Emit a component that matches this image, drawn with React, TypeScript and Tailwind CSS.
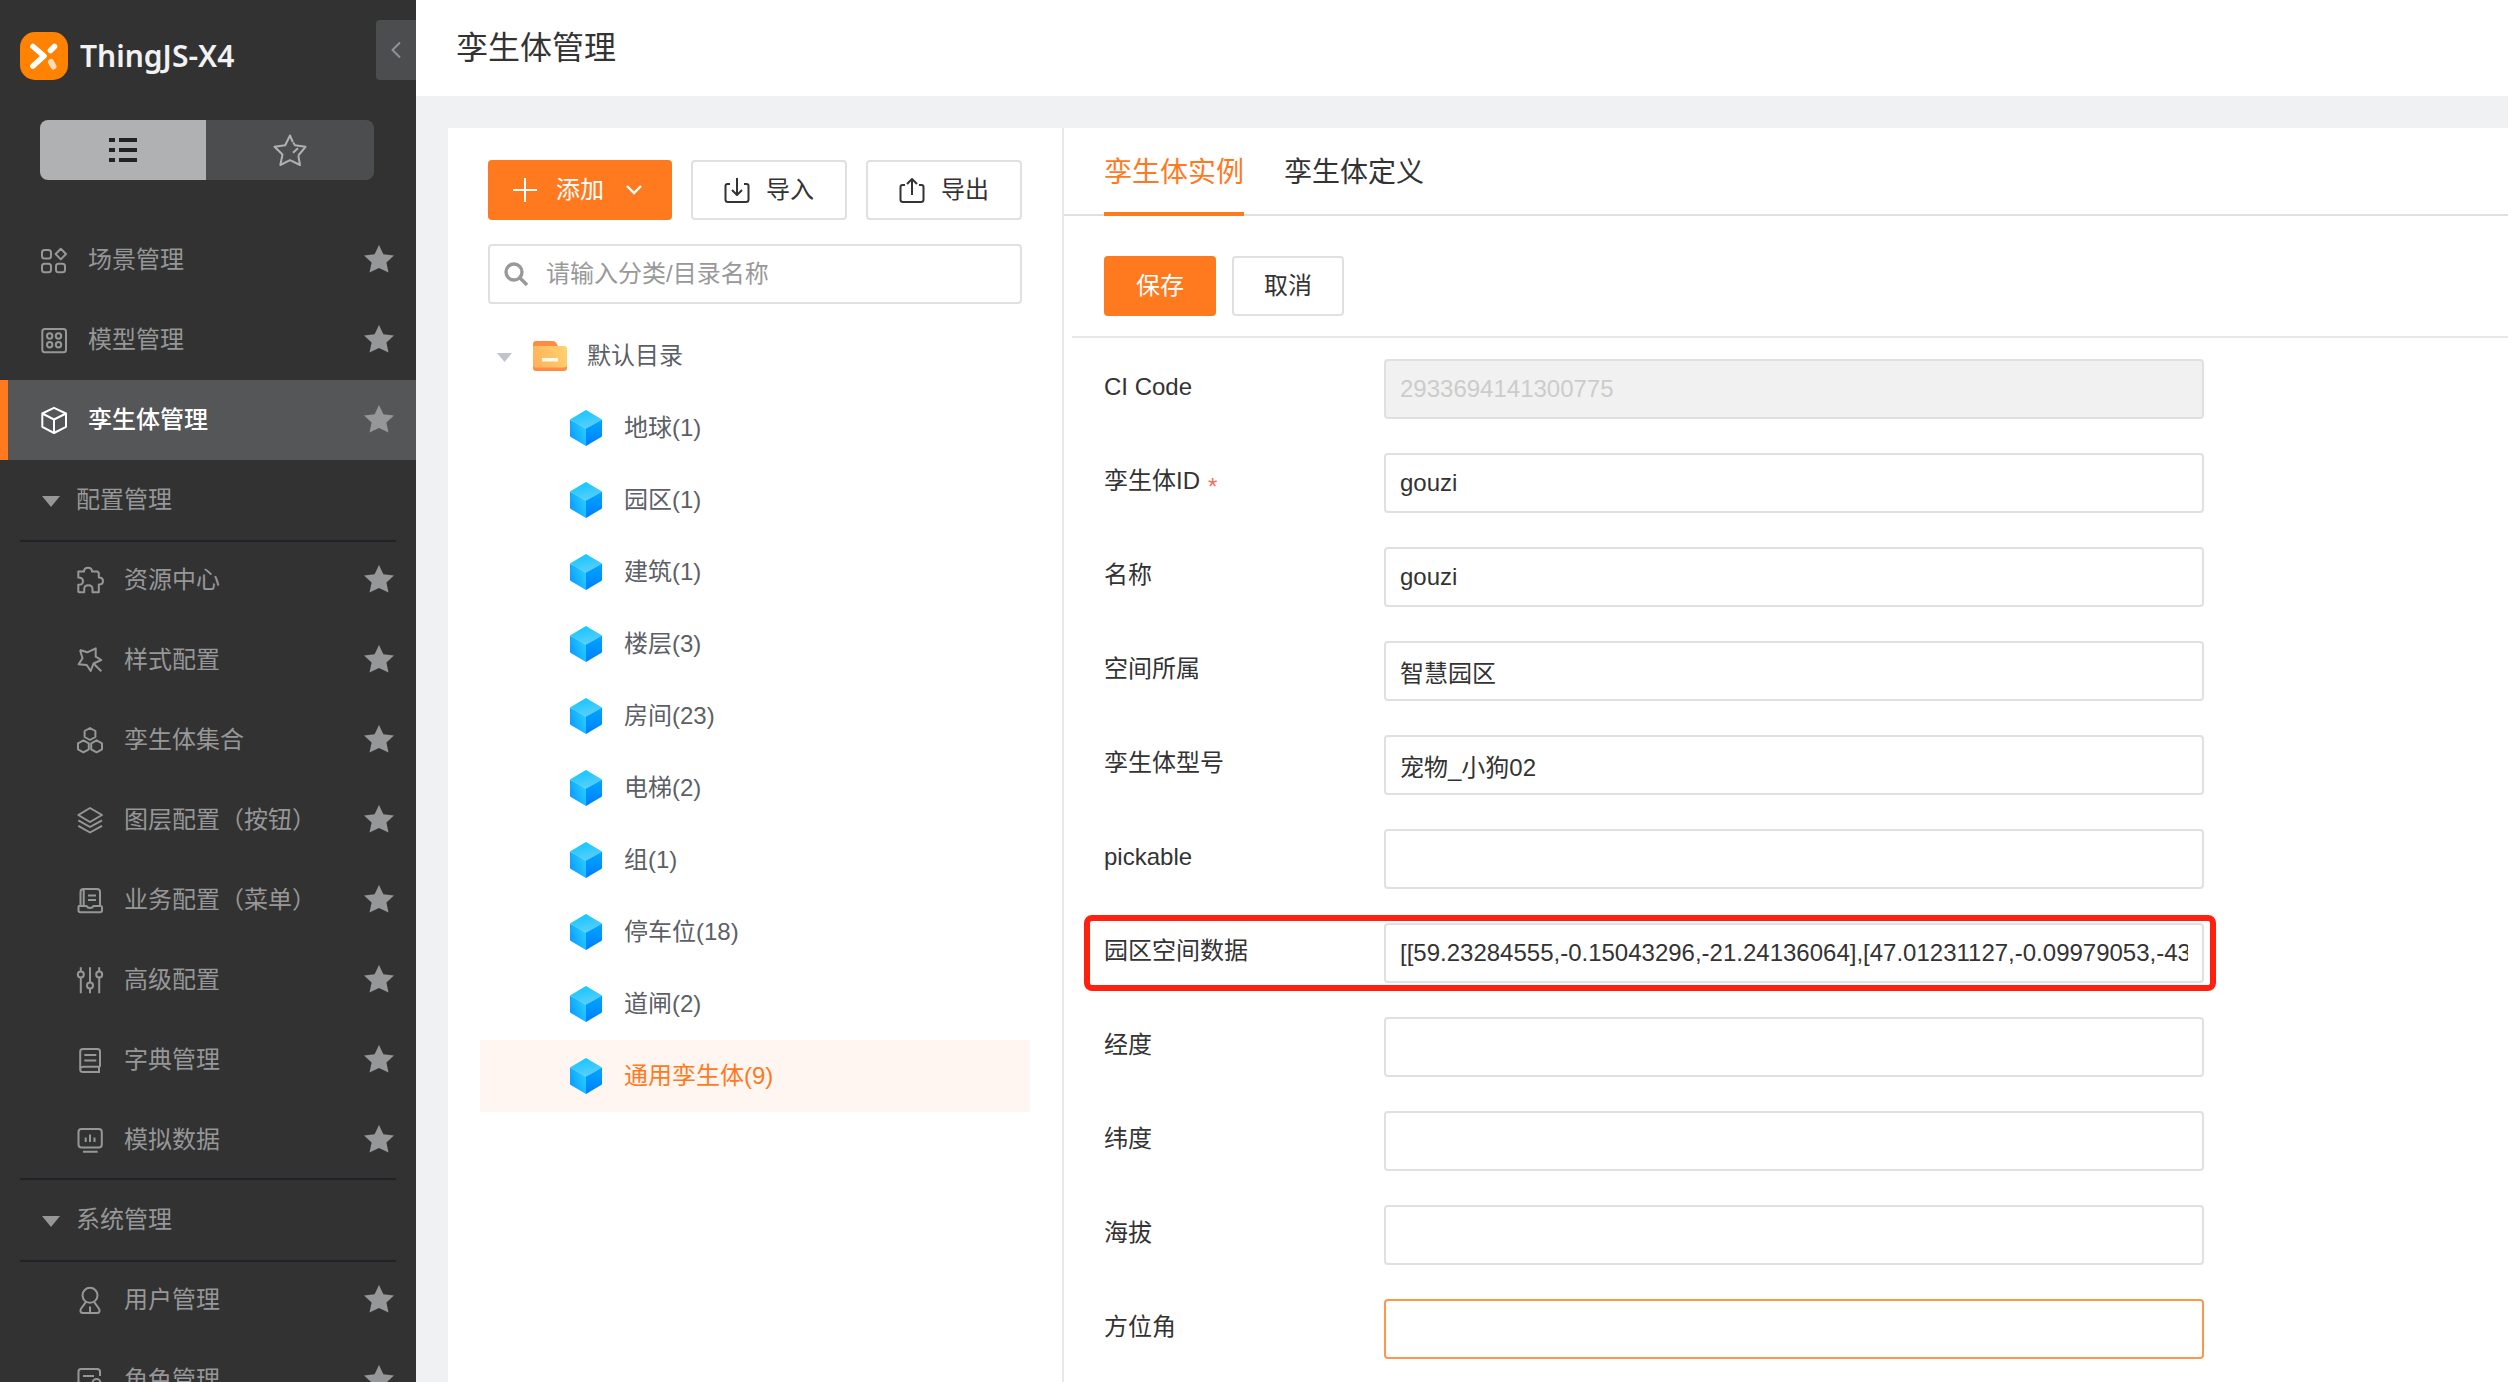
import { useState } from 'react'
import type { ReactNode } from 'react'

interface MenuItem {
  label: string
  icon: ReactNode
  active?: boolean
}

interface Field {
  id: string
  label: string
  value: string
  required?: boolean
  disabled?: boolean
  marked?: boolean
  focused?: boolean
}

function Icon({ children, size = 28 }: { children: ReactNode; size?: number }) {
  return (
    <svg
      width={size}
      height={size}
      viewBox={`0 0 ${size} ${size}`}
      fill="none"
      stroke="currentColor"
      strokeWidth="2"
      strokeLinejoin="round"
      className="shrink-0"
      aria-hidden="true"
    >
      {children}
    </svg>
  )
}

const hexagon = (cx: number, cy: number) =>
  `M${cx} ${cy - 6}l5.4 3v6l-5.4 3l-5.4-3v-6z`

const mainMenu: MenuItem[] = [
  {
    label: '场景管理',
    icon: (
      <Icon>
        <rect x="2" y="4" width="9" height="8.5" rx="2.5" />
        <rect x="2" y="17.8" width="9" height="8.5" rx="2.5" />
        <rect x="16" y="17.8" width="9" height="8.5" rx="2.5" />
        <path d="M20.8 2.8l5.2 5.2l-5.2 5.4l-5.2-5.4z" />
      </Icon>
    ),
  },
  {
    label: '模型管理',
    icon: (
      <Icon>
        <rect x="2.3" y="3" width="23.7" height="23.3" rx="2.5" />
        <circle cx="9.7" cy="10" r="2.7" />
        <circle cx="18.5" cy="10" r="2.7" />
        <circle cx="9.7" cy="18.8" r="2.7" />
        <circle cx="18.5" cy="18.8" r="2.7" />
      </Icon>
    ),
  },
  {
    label: '孪生体管理',
    active: true,
    icon: (
      <Icon>
        <path d="M14 1.8L26 7.5V20.8L14 27L2.3 20.8V7.5zM2.3 7.5L14 13.5L26 7.5M14 13.5V27" />
      </Icon>
    ),
  },
]

const configMenu: MenuItem[] = [
  {
    label: '资源中心',
    icon: (
      <Icon>
        <path d="M2.3 5.5H8C8 3 9.8 1.7 12 1.7S16 3 16 5.5H21.5L22.8 7V11.5C25.5 11.5 27 13 27 15S25.5 18.6 22.8 18.6V26.3H16.5V23C16.5 20.5 14.5 19.2 12.3 19.2S8.2 20.5 8.2 23V26.3H2.8L2.3 25.5V18.8C5.5 18.8 7 17.5 7 15.2S5.5 11.5 2.3 11.5z" />
      </Icon>
    ),
  },
  {
    label: '样式配置',
    icon: (
      <Icon>
        <path d="M4 4L11.3 6.3L19.7 2.3V10.7L25.3 14L17.5 17.5L25.3 25.3M17.5 17.5L14.7 25L10.7 19L2.6 18.3L6.5 12.3L4 4" />
      </Icon>
    ),
  },
  {
    label: '孪生体集合',
    icon: (
      <Icon>
        <path d={hexagon(14, 8)} />
        <path d={hexagon(7.4, 20.3)} />
        <path d={hexagon(20.6, 20.3)} />
      </Icon>
    ),
  },
  {
    label: '图层配置（按钮）',
    icon: (
      <Icon>
        <path d="M14 2L26 9L14 16L2.3 9zM2.3 14.3L14 21L26 14.3M2.3 19.8L14 26.5L26 19.8" />
      </Icon>
    ),
  },
  {
    label: '业务配置（菜单）',
    icon: (
      <Icon>
        <path d="M4.5 20V6Q4.5 3 7.5 3H21Q24 3 24 6V20M7.7 3.5V20M12 9.5H20M12 14H20" />
        <path d="M3 20H10.5Q11.5 22 14 22T17.5 20H25Q26 20 26 21.5V24.5Q26 26.3 24 26.3H4.5Q2.5 26.3 2.5 24.5V21Q2.5 20 3 20z" />
      </Icon>
    ),
  },
  {
    label: '高级配置',
    icon: (
      <Icon>
        <path d="M4.8 1.3V5.5M4.8 11.5V27.3M14 1.3V16.5M14 22.5V27.3M23.2 1.3V5.5M23.2 11.5V27.3" />
        <circle cx="4.8" cy="8.5" r="3" />
        <circle cx="14" cy="19.5" r="3" />
        <circle cx="23.2" cy="8.5" r="3" />
      </Icon>
    ),
  },
  {
    label: '字典管理',
    icon: (
      <Icon>
        <path d="M24 20.7V5.5Q24 3 21.5 3H7Q4.2 3 4.2 5.5V23.5Q4.2 26 7 26H24M4.5 22.5Q5 20.7 7 20.7H24M23 21V26M8.3 9H20.3M8.3 14.5H20.3" />
      </Icon>
    ),
  },
  {
    label: '模拟数据',
    icon: (
      <Icon>
        <rect x="2.5" y="3" width="23.3" height="18.5" rx="3" />
        <path d="M7 25.7H21.7M9.7 11.5V16M14 8.5V16M18.5 11.5V16" />
      </Icon>
    ),
  },
]

const systemMenu: MenuItem[] = [
  {
    label: '用户管理',
    icon: (
      <Icon>
        <circle cx="14" cy="9.3" r="7.5" />
        <path d="M10 15.8L4.8 23Q3.5 27 7 27H21Q24.5 27 23.2 23L18 15.8M14 20.5V27" />
      </Icon>
    ),
  },
  {
    label: '角色管理',
    icon: (
      <Icon>
        <path d="M10 26H5Q2.5 26 2.5 23.5V5.5Q2.5 3 5 3H21Q24 3 24 5.5V10M7 10H18" />
        <circle cx="20.5" cy="17" r="4" />
        <path d="M14 27Q15 22 20.5 22T27 27" />
      </Icon>
    ),
  },
]

const categories = [
  '地球(1)',
  '园区(1)',
  '建筑(1)',
  '楼层(3)',
  '房间(23)',
  '电梯(2)',
  '组(1)',
  '停车位(18)',
  '道闸(2)',
  '通用孪生体(9)',
]

const fields: Field[] = [
  { id: 'ci-code', label: 'CI Code', value: '2933694141300775', disabled: true },
  { id: 'twin-id', label: '孪生体ID', value: 'gouzi', required: true },
  { id: 'name', label: '名称', value: 'gouzi' },
  { id: 'space', label: '空间所属', value: '智慧园区' },
  { id: 'model', label: '孪生体型号', value: '宠物_小狗02' },
  { id: 'pickable', label: 'pickable', value: '' },
  {
    id: 'campus-data',
    label: '园区空间数据',
    value: '[[59.23284555,-0.15043296,-21.24136064],[47.01231127,-0.09979053,-43.18205261]]',
    marked: true,
  },
  { id: 'longitude', label: '经度', value: '' },
  { id: 'latitude', label: '纬度', value: '' },
  { id: 'altitude', label: '海拔', value: '' },
  { id: 'azimuth', label: '方位角', value: '', focused: true },
]

function StarButton({ label }: { label: string }) {
  return (
    <button type="button" aria-label={`收藏${label}`} className="mb-0.5 ml-auto shrink-0 text-[#969798]">
      <svg width="30" height="28" viewBox="0 0 30 28" fill="currentColor" aria-hidden="true">
        <path d="M15 0L19.4 9.2L30 10.4L22.4 17.5L24.5 27.5L15 23L5.5 27.5L7.6 17.5L0 10.4L10.6 9.2z" />
      </svg>
    </button>
  )
}

function MenuGroup({ label, items }: { label: string; items: MenuItem[] }) {
  return (
    <li>
      <button type="button" className="flex h-20 w-full items-center gap-4 pl-[42px]">
        <svg width="18" height="11" viewBox="0 0 18 11" fill="currentColor" className="mt-0.5" aria-hidden="true">
          <path d="M0 0H18L9 11z" />
        </svg>
        {label}
      </button>
      <ul className="mx-5 shadow-[inset_0_2px_#202428,inset_0_-2px_#202428]">
        {items.map((item) => (
          <li key={item.label} className="flex h-20 items-center pr-0.5 pl-14">
            <a href="#" className="flex items-center gap-5">
              {item.icon}
              {item.label}
            </a>
            <StarButton label={item.label} />
          </li>
        ))}
      </ul>
    </li>
  )
}

function Sidebar() {
  return (
    <aside className="flex w-[416px] shrink-0 flex-col overflow-hidden bg-[#323232] text-[#969798]">
      <div className="flex h-[100px] shrink-0 items-start justify-between pt-5 pl-5">
        <div className="flex items-center gap-3 pt-3">
          <svg width="48" height="48" viewBox="0 0 48 48" fill="none" aria-hidden="true">
            <rect width="48" height="48" rx="15" fill="#ff8200" />
            <path d="M13 14.5L24 24L13 34" stroke="#fff" strokeWidth="5.6" strokeLinecap="round" strokeLinejoin="round" />
            <path d="M34.5 14.5L30.5 18.5" stroke="#fff" strokeWidth="5.6" strokeLinecap="round" />
            <path d="M31 30L33.5 34.5" stroke="#ffdcb4" strokeWidth="6" strokeLinecap="round" />
          </svg>
          <span className="font-['Noto_Sans',sans-serif] text-[30px] leading-none font-semibold text-[#f2f2f2]">ThingJS-X4</span>
        </div>
        <button type="button" aria-label="收起菜单" className="flex h-[60px] w-10 items-center justify-center rounded-l bg-[#4c4d4e]">
          <svg width="10" height="16" viewBox="0 0 10 16" fill="none" stroke="#8f9399" strokeWidth="2" aria-hidden="true">
            <path d="M9 0.5L1.5 8L9 15.5" />
          </svg>
        </button>
      </div>

      <div className="mt-5 mr-[42px] ml-10 flex h-[60px] shrink-0 overflow-hidden rounded-lg">
        <button type="button" aria-label="全部菜单" className="flex w-[166px] items-center justify-center bg-[#b0b1b3]">
          <svg width="28" height="24" viewBox="0 0 28 24" fill="#222" aria-hidden="true">
            <path d="M0 0h6v4H0zM10 0h18v4H10zM0 10h6v4H0zM10 10h18v4H10zM0 20h6v4H0zM10 20h18v4H10z" />
          </svg>
        </button>
        <button type="button" aria-label="收藏菜单" className="flex flex-1 items-center justify-center bg-[#4c4d4e] text-[#b0b1b3]">
          <Icon size={34}>
            <path d="M19.8 9L17 2.5L12.2 12.3L1.5 13.8L9.5 21.5L7.3 32L17 27.2L27 32L25.3 22.5M25.3 22.5L32.5 13.8L22 12.2L20.2 9.5M20 19.8L25 15.2" />
          </Icon>
        </button>
      </div>

      <nav className="mt-10 text-2xl leading-9" aria-label="主菜单">
        <ul>
          {mainMenu.map((item) => (
            <li
              key={item.label}
              className={`flex h-20 items-center border-l-8 pr-[22px] pl-8 ${
                item.active ? 'border-[#ff7a1f] bg-[#555657]' : 'border-transparent'
              }`}
            >
              <a href="#" className={`flex items-center gap-5 ${item.active ? 'font-medium text-white' : ''}`}>
                {item.icon}
                {item.label}
              </a>
              <StarButton label={item.label} />
            </li>
          ))}
          <MenuGroup label="配置管理" items={configMenu} />
          <MenuGroup label="系统管理" items={systemMenu} />
        </ul>
      </nav>
    </aside>
  )
}

function CubeIcon() {
  return (
    <svg width="32" height="36" viewBox="0 0 32 36" className="shrink-0" aria-hidden="true">
      <defs>
        <linearGradient id="cube-top" x1="0" y1="0" x2="0.4" y2="1">
          <stop offset="0" stopColor="#06c8ff" />
          <stop offset="1" stopColor="#58ccff" />
        </linearGradient>
        <linearGradient id="cube-left" x1="1" y1="0.2" x2="0" y2="0.8">
          <stop offset="0" stopColor="#26d3ff" />
          <stop offset="1" stopColor="#0d96ff" />
        </linearGradient>
        <linearGradient id="cube-right" x1="0.5" y1="0" x2="0.5" y2="1">
          <stop offset="0" stopColor="#00a8ff" />
          <stop offset="1" stopColor="#007dff" />
        </linearGradient>
      </defs>
      <path d="M16 0L32 9.5L16 18.5L0 9.5z" fill="url(#cube-top)" />
      <path d="M0 9.5L16 18.5V36L0 26.5z" fill="url(#cube-left)" />
      <path d="M32 9.5L16 18.5V36L32 26.5z" fill="url(#cube-right)" />
    </svg>
  )
}

function FolderIcon() {
  return (
    <svg width="34" height="30" viewBox="0 0 34 30" className="shrink-0" aria-hidden="true">
      <defs>
        <linearGradient id="folder" x1="0" y1="0.6" x2="1" y2="0.3">
          <stop offset="0" stopColor="#ffb35c" />
          <stop offset="1" stopColor="#ffd06e" />
        </linearGradient>
      </defs>
      <path d="M0 3Q0 0 3 0H20Q22 0 23 1.5L25 5V10H0z" fill="#ff8c45" />
      <path d="M0 20H34V27Q34 30 31 30H3Q0 30 0 27z" fill="#ff8c45" />
      <path d="M0 5H31Q34 5 34 8V24Q34 26.5 31 26.5H3Q0 26.5 0 24z" fill="url(#folder)" />
      <path d="M9 17H25V20.5H9z" fill="#fff8ee" />
    </svg>
  )
}

const outlineButton =
  'flex h-[60px] items-center justify-center rounded border-2 border-[#e0e0e0] bg-white text-[#333]'

function CategoryPanel() {
  const [selected, setSelected] = useState('通用孪生体(9)')

  return (
    <section className="w-[616px] shrink-0 border-r-2 border-[#e8e8e8] pt-8 pr-8 pl-8">
      <div className="mr-2 ml-2 flex justify-between">
        <button type="button" className="flex h-[60px] w-[184px] items-center rounded bg-[#ff7a1f] px-6 text-white">
          <svg width="26" height="26" viewBox="0 0 26 26" fill="none" stroke="currentColor" strokeWidth="2" aria-hidden="true">
            <path d="M13 1V25M1 13H25" />
          </svg>
          <span className="ml-[18px]">添加</span>
          <svg width="16" height="10" viewBox="0 0 16 10" fill="none" stroke="currentColor" strokeWidth="2.4" className="ml-[22px]" aria-hidden="true">
            <path d="M1 1L8 8L15 1" />
          </svg>
        </button>
        <button type="button" className={`${outlineButton} w-[156px] gap-4`}>
          <Icon size={26}>
            <path d="M6 7H3.5Q1.5 7 1.5 9V22.5Q1.5 25 4 25H22Q24.5 25 24.5 22.5V9Q24.5 7 22.5 7H20M13 1V17.5M8 13L13 18L18 13" />
          </Icon>
          导入
        </button>
        <button type="button" className={`${outlineButton} w-[156px] gap-4`}>
          <Icon size={26}>
            <path d="M6 8H3.5Q1.5 8 1.5 10V22.5Q1.5 25 4 25H22Q24.5 25 24.5 22.5V10Q24.5 8 22.5 8H20M13 18V2M8 7L13 2L18 7" />
          </Icon>
          导出
        </button>
      </div>

      <label className="mt-6 mr-2 ml-2 flex h-[60px] items-center gap-[18px] rounded border-2 border-[#e0e0e0] pl-3.5">
        <svg width="24" height="24" viewBox="0 0 24 24" fill="none" stroke="#999" strokeWidth="3.4" aria-hidden="true">
          <circle cx="10" cy="10" r="8" />
          <path d="M15.5 15.5L23 23" />
        </svg>
        <input
          type="text"
          aria-label="搜索分类"
          placeholder="请输入分类/目录名称"
          className="h-full min-w-0 flex-1 outline-none placeholder:text-[#999]"
        />
      </label>

      <div className="mt-4 flex h-[72px] items-center pl-[17px] text-[#5c5f66]">
        <svg width="15" height="9" viewBox="0 0 15 9" fill="#bfc4cc" className="mt-0.5" aria-hidden="true">
          <path d="M0 0H15L7.5 9z" />
        </svg>
        <span className="mr-5 ml-[21px]">
          <FolderIcon />
        </span>
        默认目录
      </div>
      <ul>
        {categories.map((name) => (
          <li key={name}>
            <button
              type="button"
              onClick={() => setSelected(name)}
              className={`flex h-[72px] w-full items-center gap-[22px] pl-[90px] ${
                name === selected ? 'bg-[#fff6f1] text-[#ff7a1f]' : 'text-[#5c5f66]'
              }`}
            >
              <CubeIcon />
              {name}
            </button>
          </li>
        ))}
      </ul>
    </section>
  )
}

function FieldRow({ field }: { field: Field }) {
  const border = field.focused ? 'border-[#ff964d]' : 'border-[#e0e0e0]'

  return (
    <div className="relative flex items-center">
      <label htmlFor={field.id} className="w-[280px] shrink-0 pb-1 text-[#333]">
        {field.label}
        {field.required && <span className="ml-2 align-sub leading-none text-[#f56c5c]">*</span>}
      </label>
      <input
        id={field.id}
        type="text"
        defaultValue={field.value}
        disabled={field.disabled}
        className={`h-[60px] min-w-0 flex-1 rounded border-2 px-3.5 outline-none ${border} ${
          field.disabled ? 'bg-[#f1f1f1] text-[#ccc]' : 'bg-white text-[#333]'
        }`}
      />
      {field.marked && (
        <div className="pointer-events-none absolute -top-2 -right-3 -bottom-2 -left-5 rounded-lg border-6 border-[#ff2010]" />
      )}
    </div>
  )
}

function DetailPanel() {
  return (
    <section className="min-w-0 flex-1">
      <div role="tablist" className="flex h-[88px] gap-10 pl-10 text-[28px] shadow-[inset_0_-2px_#e0e0e0]">
        <button type="button" role="tab" aria-selected="true" className="border-b-4 border-[#ff7a1f] pt-1.5 text-[#ff7a1f]">
          孪生体实例
        </button>
        <button type="button" role="tab" aria-selected="false" className="border-b-4 border-transparent pt-1.5 text-[#333]">
          孪生体定义
        </button>
      </div>
      <div className="ml-2 flex gap-4 border-b-2 border-[#e8e8e8] pt-10 pb-5 pl-8">
        <button type="button" className="h-[60px] w-28 rounded bg-[#ff7a1f] text-white">
          保存
        </button>
        <button type="button" className={`${outlineButton} w-28`}>
          取消
        </button>
      </div>
      <form className="mt-[21px] ml-10 flex max-w-[1100px] flex-col gap-[34px]">
        {fields.map((field) => (
          <FieldRow key={field.id} field={field} />
        ))}
      </form>
    </section>
  )
}

export default function App() {
  return (
    <div className="flex h-screen overflow-hidden bg-[#f0f1f3] font-['Liberation_Sans','Noto_Sans_CJK_SC',sans-serif] text-2xl leading-9">
      <Sidebar />
      <div className="flex min-w-0 flex-1 flex-col">
        <header className="flex h-24 shrink-0 items-center bg-white pl-10">
          <h1 className="text-[32px] text-[#333]">孪生体管理</h1>
        </header>
        <main className="mt-8 ml-8 flex min-h-0 flex-1 overflow-hidden bg-white">
          <CategoryPanel />
          <DetailPanel />
        </main>
      </div>
    </div>
  )
}
